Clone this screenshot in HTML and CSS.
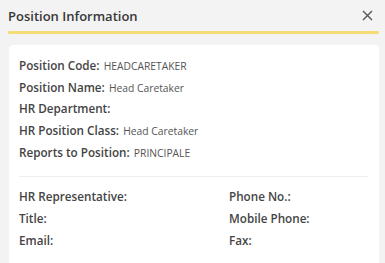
FILE: index.html
```html
<!DOCTYPE html>
<html>
<head>
<meta charset="utf-8">
<link rel="stylesheet" href="styles.css">
</head>
<body>
<div class="panel">
  <div class="header">
    <span class="title">Position Information</span>
    <svg class="close" width="11" height="11" viewBox="0 0 11 11"><path d="M1 1L10 10M10 1L1 10" stroke="#555" stroke-width="1.4" fill="none"/></svg>
  </div>
  <div class="accent"></div>
  <div class="card">
    <div class="list">
      <div class="row"><span class="lbl">Position Code:</span> <span class="val">HEADCARETAKER</span></div>
      <div class="row"><span class="lbl">Position Name:</span> <span class="val">Head Caretaker</span></div>
      <div class="row"><span class="lbl">HR Department:</span></div>
      <div class="row"><span class="lbl">HR Position Class:</span> <span class="val">Head Caretaker</span></div>
      <div class="row"><span class="lbl">Reports to Position:</span> <span class="val">PRINCIPALE</span></div>
    </div>
    <div class="divider"></div>
    <div class="grid">
      <div class="row"><span class="lbl">HR Representative:</span></div>
      <div class="row"><span class="lbl">Phone No.:</span></div>
      <div class="row"><span class="lbl">Title:</span></div>
      <div class="row"><span class="lbl">Mobile Phone:</span></div>
      <div class="row"><span class="lbl">Email:</span></div>
      <div class="row"><span class="lbl">Fax:</span></div>
    </div>
  </div>
</div>
</body>
</html>
```
FILE: styles.css
```css
html, body {
  margin: 0;
  padding: 0;
  background: #f3f3f3;
  font-family: "Open Sans", "Noto Sans", sans-serif;
  color: #3c3c3c;
}
.panel {
  width: 385px;
  height: 263px;
  padding: 0 6px 0 8px;
  box-sizing: border-box;
  overflow: hidden;
}
.header {
  display: flex;
  justify-content: space-between;
  align-items: center;
  height: 30px;
  padding-right: 6px;
}
.title {
  font-size: 13px;
  font-weight: 600;
  color: #383838;
  padding-top: 1px;
}
.close {
  display: block;
}
.accent {
  height: 3px;
  background: #f5dc76;
  margin-top: 1px;
  border-radius: 1px;
}
.card {
  background: #fff;
  margin: 11px 0 0 1px;
  border-radius: 4px;
  padding: 9px 11px 12px 10px;
  height: 230px;
  box-sizing: border-box;
}
.list {
  display: flex;
  flex-direction: column;
}
.row {
  height: 21.7px;
  line-height: 21.7px;
  white-space: nowrap;
}
.lbl {
  font-size: 11.7px;
  font-weight: 600;
  color: #444;
}
.val {
  font-size: 10.3px;
  color: #555;
}
.divider {
  height: 1px;
  background: #eeeeee;
  margin: 14px 0 8px 0;
}
.grid {
  display: grid;
  grid-template-columns: 210px 1fr;
}
```
